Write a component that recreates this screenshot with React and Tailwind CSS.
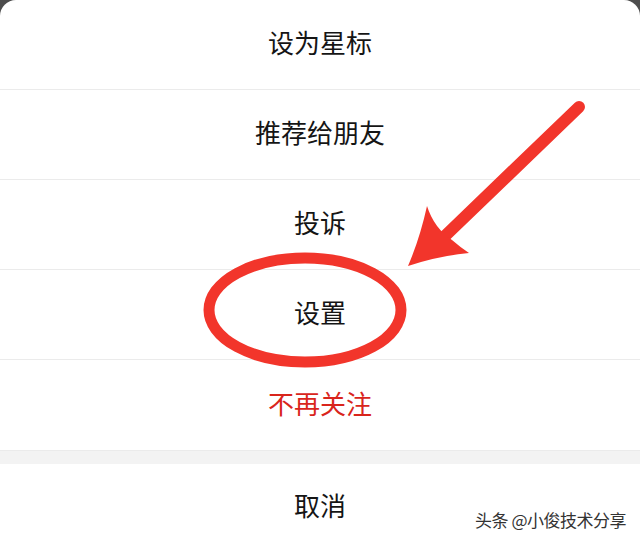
const items = [
  { label: "设为星标" },
  { label: "推荐给朋友" },
  { label: "投诉" },
  { label: "设置" },
  { label: "不再关注", danger: true },
];

export default function App() {
  return (
    <div
      className="relative w-[640px] h-[543px] overflow-hidden bg-[#4d4d4d]"
      style={{ fontFamily: '"Noto Sans CJK SC", "Noto Sans", sans-serif' }}
    >
      <div className="flex flex-col h-full bg-white rounded-t-[16px]">
        {items.map((item, i) => (
          <div
            key={item.label}
            className={
              "h-[90px] pb-[6px] flex items-center justify-center text-[26px] " +
              (i < items.length - 1 ? "border-b border-[#ebebeb] " : "") +
              (item.danger ? "text-[#d9251c]" : "text-[#151515]")
            }
          >
            {item.label}
          </div>
        ))}
        <div className="h-[14px] bg-[#f3f3f3] border-t border-[#ebebeb]" />
        <div className="flex-1 pt-[2px] flex items-center justify-center text-[26px] text-[#151515]">
          取消
        </div>
      </div>

      {/* annotation overlay */}
      <svg
        className="absolute inset-0 pointer-events-none"
        width="640"
        height="543"
        viewBox="0 0 640 543"
      >
        <ellipse
          cx="305"
          cy="310"
          rx="96"
          ry="52"
          fill="none"
          stroke="#f2352b"
          strokeWidth="11"
        />
        <line
          x1="579"
          y1="107"
          x2="445"
          y2="236"
          stroke="#f2352b"
          strokeWidth="12"
          strokeLinecap="round"
        />
        <path
          d="M408 266 Q420 238 427 206 Q434 228 452 240 Q460 247 469 253 Q438 256 408 266 Z"
          fill="#f2352b"
        />
      </svg>

      {/* watermark */}
      <div
        className="absolute right-[14px] bottom-[11px] text-[17px] text-[#333] tracking-[-0.5px]"
        style={{ textShadow: "0 0 2px #fff, 0 0 2px #fff" }}
      >
        头条 @小俊技术分享
      </div>
    </div>
  );
}
